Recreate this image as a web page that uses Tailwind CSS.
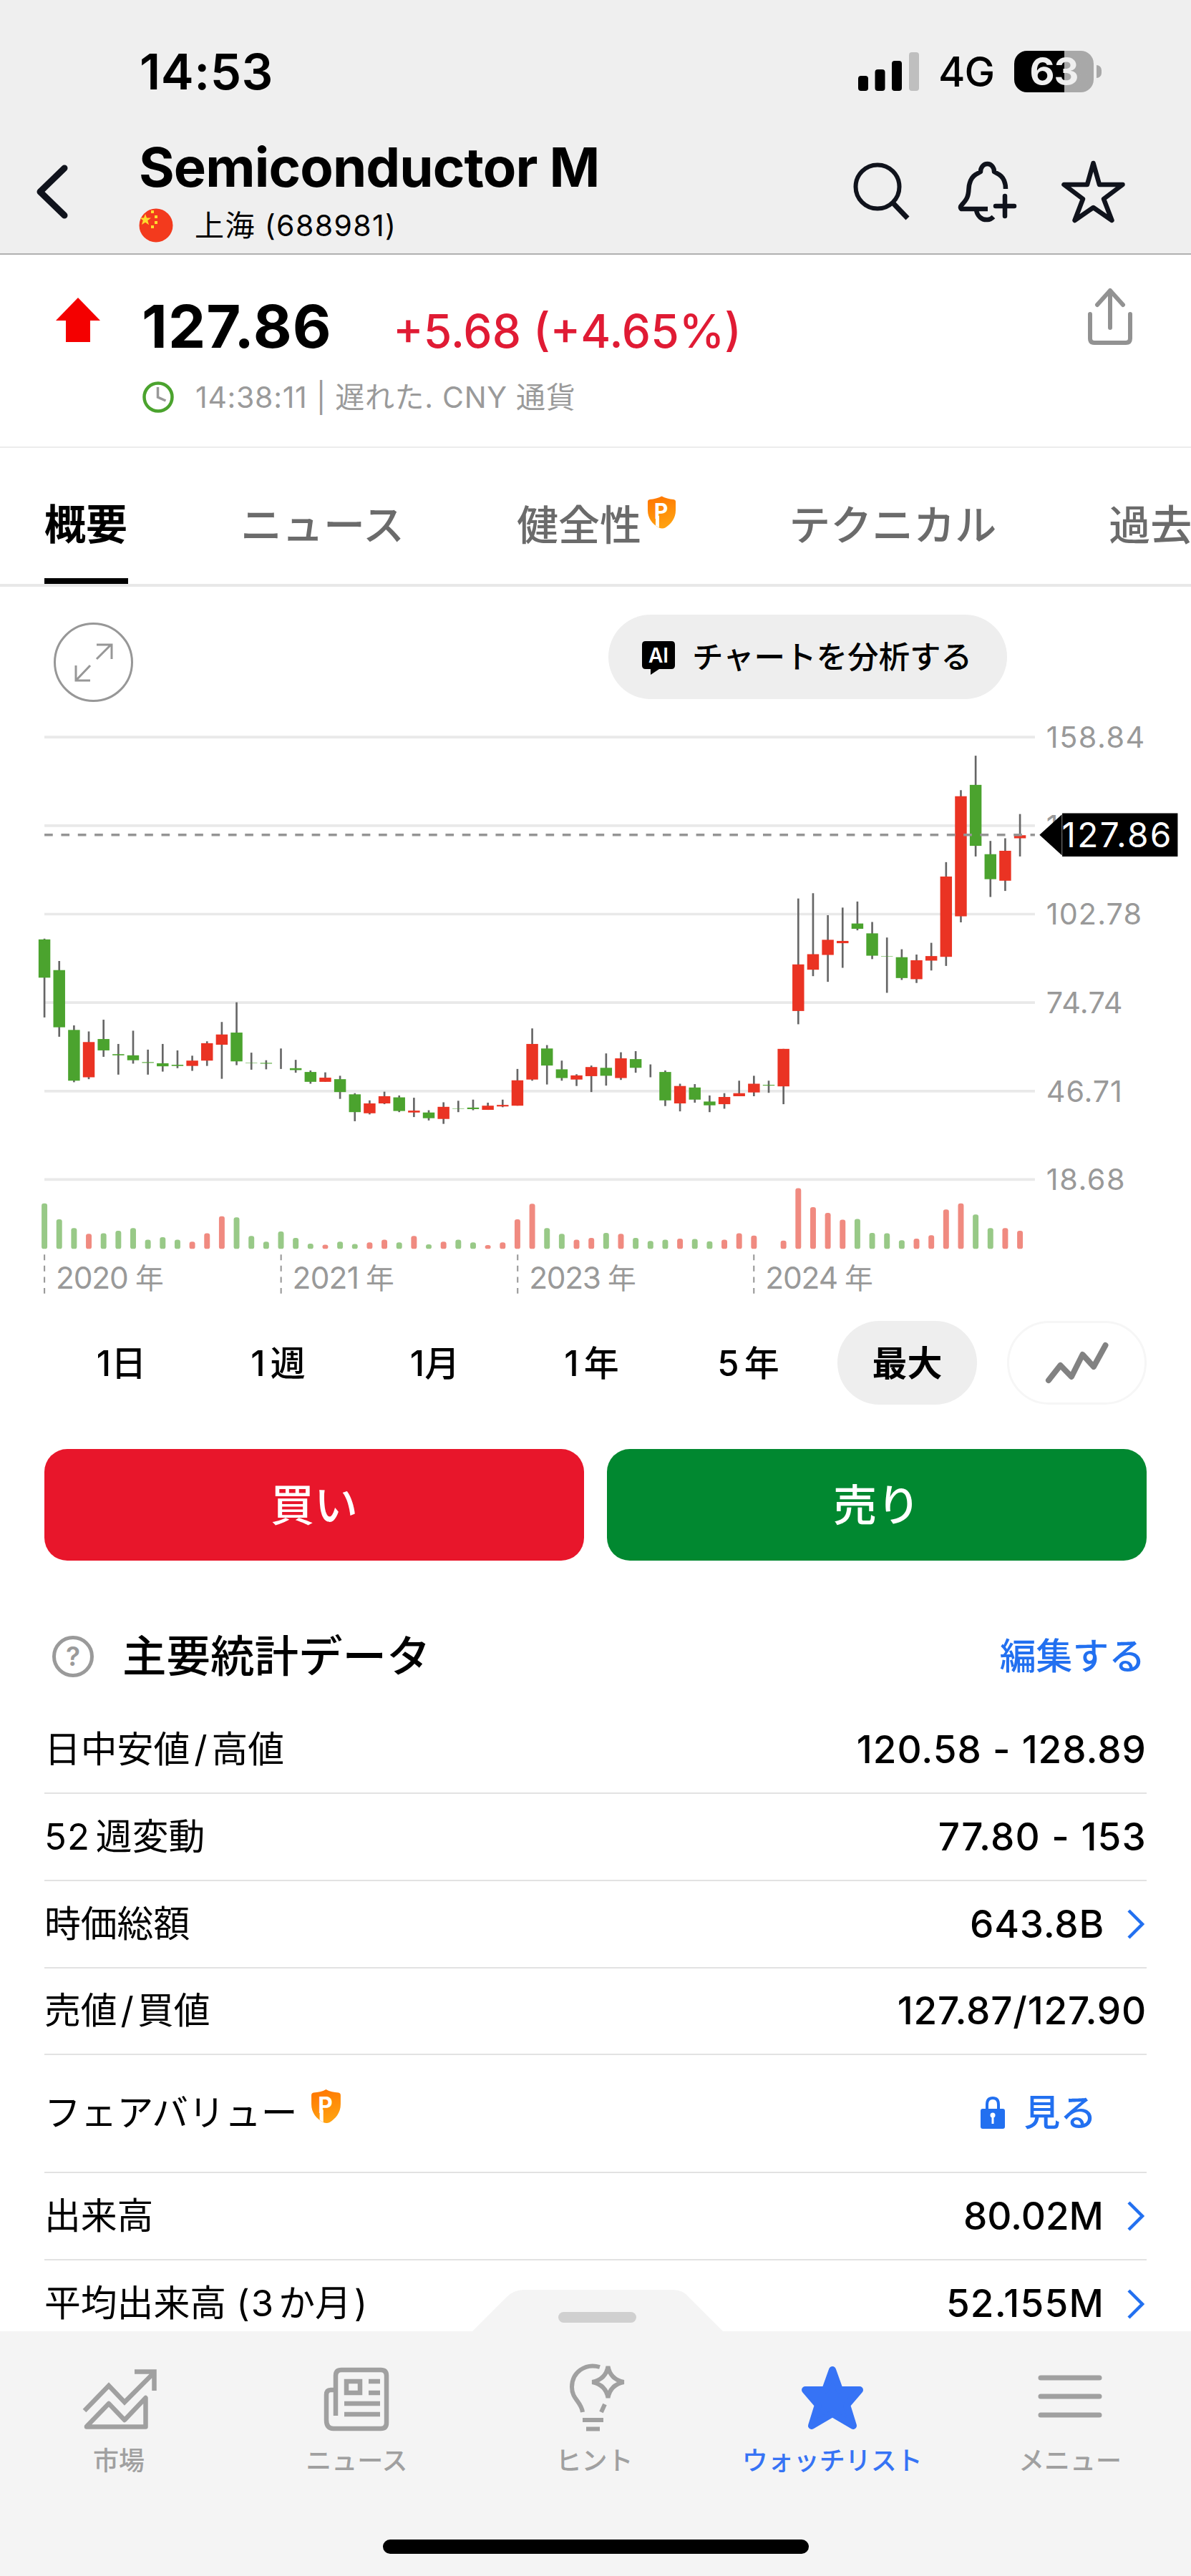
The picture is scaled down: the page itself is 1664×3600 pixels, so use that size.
<!DOCTYPE html>
<html lang="ja">
<head>
  <meta charset="UTF-8" />
  <meta name="viewport" content="width=device-width, initial-scale=1.0"/>
  <title>Semiconductor M - 上海 (688981)</title>
  <script src="https://cdn.jsdelivr.net/npm/@tailwindcss/browser@4"></script>
</head>
<body class="bg-white text-black font-['Inter','Noto_Sans_CJK_JP',sans-serif] leading-none">
  <div class="relative w-[1664px] h-[3600px] overflow-hidden flex flex-col">

    <!-- Header -->
    <header class="h-[356px] shrink-0 bg-[#efefef] border-b-2 border-[#b0b0b0]">
      <div class="h-[200px] pl-[195px] pr-[125px] flex items-center justify-between">
        <span class="text-[69px] font-semibold tracking-[0.500px]">14:53</span>
        <div class="flex items-center">
          <svg class="w-[86px] h-[54px]" viewBox="0 0 86 54">
            <rect x="0" y="33" width="14" height="21" rx="4"/>
            <rect x="23.500" y="24" width="14" height="30" rx="4"/>
            <rect x="47" y="12" width="14" height="42" rx="4"/>
            <rect x="71" y="0" width="14" height="54" rx="4" fill="#bfbfbf"/>
          </svg>
          <span class="ml-[26px] text-[57px] font-medium tracking-[-1px]">4G</span>
          <div class="ml-[28px] w-[111px] h-[58px] rounded-[18px] bg-linear-to-r from-black from-63% to-[#a8a8a8] to-63% flex items-center justify-center">
            <span class="text-[54px] font-bold text-[#efefef] tracking-[-1px]">63</span>
          </div>
          <div class="ml-[4px] w-[7px] h-[18px] rounded-r-full bg-[#a8a8a8]"></div>
        </div>
      </div>
      <div class="h-[154px] flex">
        <svg class="mt-[26px] ml-[46px] w-[54px] h-[84px] shrink-0" viewBox="0 0 54 84" fill="none" stroke="#10131c" stroke-width="9" stroke-linecap="round" stroke-linejoin="round">
          <path d="M44 9 10 42l34 33"/>
        </svg>
        <div class="-mt-[5px] ml-[94px] w-[800px]">
          <div class="text-[76px] font-bold tracking-[-0.900px] whitespace-nowrap">Semiconductor M</div>
          <div class="mt-[20px] flex items-center">
            <svg class="w-[48px] h-[48px]" viewBox="0 0 48 48">
              <circle cx="24" cy="24" r="23.500" fill="#f33a1d"/>
              <path d="m9 8 2 5.500h6l-4.700 3.700 1.800 6L9 19.700 4 23l1.800-6L1.500 13.500H7Z" fill="#fddb2e"/>
              <path d="M17 3h4v4h-4zM22 10h4v4h-4zM22 18h4v4h-4zM17 24h4v4h-4z" fill="#fddb2e"/>
            </svg>
            <span class="ml-[30px] text-[41px] tracking-[1.400px]">上海 (688981)</span>
          </div>
        </div>
        <svg class="mt-[24px] ml-[192px] w-[88px] h-[88px]" viewBox="0 0 88 88" fill="none" stroke="#10131c" stroke-width="6">
          <ellipse cx="40" cy="37" rx="30.500" ry="30.500"/>
          <path d="M61 59l21 22" stroke-width="7"/>
        </svg>
        <svg class="mt-[22px] ml-[60px] w-[92px] h-[92px]" viewBox="0 0 92 92" fill="none" stroke="#10131c" stroke-width="6.500" stroke-linejoin="round">
          <path d="M71 42c0-9-3-16-9-20l-7-4c0-6-4-11-9.500-11S36 12 36 18l-7 4c-6 4-9 11-9.500 20-.5 11-3 15-9.500 22-4 4-1 6 0 6h36"/>
          <path d="M30 71c1 9 8 15 16 14 4 0 6-2 8-4"/>
          <path d="M70 52v28M57 66h26" stroke-linecap="round"/>
        </svg>
        <svg class="mt-[20px] ml-[54px] w-[95px] h-[95px]" viewBox="0 0 95 95" fill="none" stroke="#10131c" stroke-width="6.500" stroke-linejoin="round">
          <path d="M47.500 8 56 38h32.500L62 58l11.500 30-26-18-26 18L33 58 6.500 38H39Z"/>
        </svg>
      </div>
    </header>

    <!-- Price -->
    <section class="h-[270px] shrink-0 border-b-2 border-[#ececec] flex">
      <svg class="mt-[60px] ml-[78px] w-[62px] h-[62px] shrink-0" viewBox="0 0 62 62" fill="#f40000">
        <path d="M31 0 62 32H48v30H14V32H0Z"/>
      </svg>
      <div class="ml-[58px] w-[1200px]">
        <div class="mt-[59px] flex items-baseline">
          <span class="w-[351px] text-[83px] font-bold tracking-[1.100px]">127.86</span>
          <span class="text-[64px] font-medium text-[#e01b34]">+5.68 (+4.65%)</span>
        </div>
        <div class="mt-[34px] flex items-center text-[#9a9a9a]">
          <svg class="w-[46px] h-[46px]" viewBox="0 0 46 46" fill="none" stroke-width="4.500">
            <circle cx="23" cy="23" r="19.500" stroke="#4ba32e"/>
            <path d="M22.500 9v14l11 5" stroke="#999" stroke-width="3.500"/>
          </svg>
          <span class="ml-[29px] text-[41px] tracking-[0.700px] whitespace-nowrap">14:38:11 | 遅れた. CNY 通貨</span>
        </div>
      </div>
      <svg class="mt-[42px] ml-[116px] w-[74px] h-[90px] shrink-0" viewBox="0 0 74 90" fill="none" stroke="#929292" stroke-width="6" stroke-linecap="round" stroke-linejoin="round">
        <path d="M37 60V8M19 28 37 8l18 20M9 41v34q0 6 6 6h44q6 0 6-6V41"/>
      </svg>
    </section>

    <!-- Tabs -->
    <nav class="h-[194px] shrink-0 border-b-4 border-[#e8e8e8] pl-[62px] flex gap-[157px] text-[58px] font-medium text-[#6b6b6b] whitespace-nowrap">
      <div class="h-[190px] w-[117px] shrink-0 pt-[78px] border-b-8 border-black text-black font-bold">概要</div>
      <div class="pt-[79px]">ニュース</div>
      <div class="pt-[79px] flex">健全性
        <svg class="-mt-[12px] ml-[8px] w-[41px] h-[46px] overflow-visible" viewBox="0 0 42 46">
          <linearGradient id="pro" x1="0" y1="0" x2="0.300" y2="1">
            <stop stop-color="#ff7300"/><stop offset="1" stop-color="#ffa010"/>
          </linearGradient>
          <path d="M21 0c5 3 11 4 17 4.500q3 .5 3 3.500v12c0 12-7 20-15 25q-4 2-9 0C8 40 1 32 1 20V8q0-3 3-3.500C10 4 16 3 21 0Z" fill="url(#pro)"/>
          <text x="10" y="32" class="text-[31px] font-bold" fill="#fff">P</text>
          <path d="M12.300 28h5v17l-5-3Z" fill="#fff"/>
        </svg>
      </div>
      <div class="pt-[79px]">テクニカル</div>
      <div class="pt-[79px]">過去</div>
    </nav>

    <!-- Chart toolbar -->
    <div class="h-[180px] shrink-0 flex">
      <svg class="mt-[48px] ml-[73px] w-[115px] h-[115px]" viewBox="0 0 115 115" fill="none" stroke="#979797" stroke-width="3">
        <circle cx="57.500" cy="57.500" r="54"/>
        <path d="m62 53 20-20M62 33h21v20M53 62 33 83M33 62v21h20"/>
      </svg>
      <button class="mt-[39px] ml-[662px] w-[557px] h-[118px] rounded-full bg-[#eee] pl-[46px] flex items-center text-[43.500px] font-medium whitespace-nowrap">
        <svg class="mt-[3px] w-[48px] h-[48px]" viewBox="0 0 48 48">
          <path d="M6 0h36q5 0 5 5v29q0 5-5 5H25l-12 8v-8H6q-5 0-5-5V5q0-5 5-5Z"/>
          <text x="24" y="30" text-anchor="middle" class="text-[28px] font-semibold" fill="#fff">AI</text>
        </svg>
        <span class="ml-[23px] pt-[2px]">チャートを分析する</span>
      </button>
    </div>

    <!-- Price chart -->
    <svg id="chart" class="w-[1664px] h-[830px] shrink-0" viewBox="0 0 3136 1568" preserveAspectRatio="none"></svg>

    <!-- Range selector -->
    <div class="mt-[16px] h-[117px] shrink-0 pl-[72px] flex gap-[24px] text-[49px] font-medium">
      <button class="pt-[2px] w-[195px]">1日</button>
      <button class="pt-[2px] w-[195px]"><span class="mr-[7px]">1</span>週</button>
      <button class="pt-[2px] w-[195px]">1月</button>
      <button class="pt-[2px] w-[195px]"><span class="mr-[7px]">1</span>年</button>
      <button class="pt-[2px] w-[195px]"><span class="mr-[7px]">5</span>年</button>
      <button class="pt-[2px] ml-[3px] w-[195px] rounded-full bg-[#eee] font-bold">最大</button>
      <button class="ml-[18px] w-[195px] rounded-full border-[3px] border-[#f6f6f6] flex items-center justify-center">
        <svg class="w-[90px] h-[60px]" viewBox="0 0 90 60" fill="none" stroke="#828282" stroke-width="8" stroke-linecap="round" stroke-linejoin="round">
          <path d="m5 54 16.500-21L37 49l15.500-31L68 35 84.500 5"/>
        </svg>
      </button>
    </div>

    <!-- Buy / Sell -->
    <div class="mt-[62px] h-[156px] shrink-0 px-[62px] flex gap-[32px] text-[61px] font-medium text-white">
      <button class="pt-[3px] flex-1 rounded-[32px] bg-[#e8162b]">買い</button>
      <button class="pt-[3px] flex-1 rounded-[32px] bg-[#018830]">売り</button>
    </div>

    <!-- Key statistics -->
    <section class="pl-[62px] pr-[62px] text-[50.800px]">
      <div class="mt-[84px] h-[100px] flex items-center">
        <svg class="ml-[10px] w-[60px] h-[60px]" viewBox="0 0 60 60">
          <circle cx="30" cy="30" r="26.500" fill="none" stroke="#9a9a9a" stroke-width="5"/>
          <text x="30" y="43" text-anchor="middle" class="text-[37px] font-semibold" fill="#9a9a9a">?</text>
        </svg>
        <h2 class="ml-[39px] text-[61.500px] font-medium">主要統計データ</h2>
        <a class="ml-auto mr-[2px] font-medium text-[#2270f0]">編集する</a>
      </div>
      <div class="mt-[20px] h-[122px] border-b-2 border-[#e2e2e2] flex items-center justify-between">
        <span>日中安値<span class="mx-[6px]">/</span>高値</span><span class="text-[53px] font-medium tracking-[1px]">120.58 - 128.89</span>
      </div>
      <div class="h-[122px] border-b-2 border-[#e2e2e2] flex items-center justify-between">
        <span><span class="mr-[8px] tracking-[1px]">52</span>週変動</span><span class="text-[53px] font-medium tracking-[1.200px]">77.80 - 153</span>
      </div>
      <div class="h-[122px] border-b-2 border-[#e2e2e2] flex items-center justify-between">
        <span>時価総額</span>
        <span class="flex items-center text-[53px] font-medium tracking-[0.800px]">643.8B
          <svg class="ml-[31px] w-[28px] h-[46px]" viewBox="0 0 28 46" fill="none" stroke="#2270f0" stroke-width="4.500"><path d="m3 4 19 19L3 42"/></svg>
        </span>
      </div>
      <div class="h-[121px] border-b-2 border-[#e2e2e2] flex items-center justify-between">
        <span>売値<span class="mx-[5px]">/</span>買値</span><span class="text-[53px] font-medium tracking-[0.800px]">127.87/127.90</span>
      </div>
      <div class="h-[165px] border-b-2 border-[#e2e2e2] flex items-center justify-between">
        <span class="flex">フェアバリュー
          <svg class="-mt-[8px] ml-[18px] w-[43px] h-[47px] overflow-visible" viewBox="0 0 42 46">
            <path d="M21 0c5 3 11 4 17 4.500q3 .5 3 3.500v12c0 12-7 20-15 25q-4 2-9 0C8 40 1 32 1 20V8q0-3 3-3.500C10 4 16 3 21 0Z" fill="url(#pro)"/>
            <text x="10" y="32" class="text-[31px] font-bold" fill="#fff">P</text>
            <path d="M12.300 28h5v17l-5-3Z" fill="#fff"/>
          </svg>
        </span>
        <a class="mr-[70px] flex items-center font-medium text-[#2270f0]">
          <svg class="w-[34px] h-[46px]" viewBox="0 0 34 46">
            <path d="M9 20V11q0-9 8-9t8 9v9" fill="none" stroke="#2270f0" stroke-width="4"/>
            <rect y="17" width="34" height="28" rx="3" fill="#2270f0"/>
            <circle cx="17" cy="26" r="3.500" fill="#fff"/>
            <path d="M17 26v12" stroke="#fff" stroke-width="3"/>
          </svg>
          <span class="ml-[26px]">見る</span>
        </a>
      </div>
      <div class="h-[122px] border-b-2 border-[#e2e2e2] flex items-center justify-between">
        <span>出来高</span>
        <span class="flex items-center text-[53px] font-medium">80.02M
          <svg class="ml-[32px] w-[28px] h-[46px]" viewBox="0 0 28 46" fill="none" stroke="#2270f0" stroke-width="4.500"><path d="m3 4 19 19L3 42"/></svg>
        </span>
      </div>
      <div class="h-[121px] flex items-center justify-between">
        <span>平均出来高 <span class="mr-[2px]">(</span><span class="mr-[7px]">3</span>か月<span class="ml-[4px]">)</span></span>
        <span class="flex items-center text-[53px] font-medium tracking-[1.200px]">52.155M
          <svg class="ml-[31px] w-[28px] h-[46px]" viewBox="0 0 28 46" fill="none" stroke="#2270f0" stroke-width="4.500"><path d="m3 4 19 19L3 42"/></svg>
        </span>
      </div>
    </section>

    <!-- Bottom tab bar, lies over the scrolled list -->
    <footer class="absolute left-0 bottom-0 w-full">
      <svg class="block ml-[660px] w-[350px] h-[59px]" viewBox="0 0 350 59">
        <path d="M0 59 48 11Q58 1 72 1h208q14 0 22 10l48 48Z" fill="#f4f4f4"/>
        <rect x="120" y="32" width="109" height="15" rx="7.500" fill="#d0d0d0"/>
      </svg>
      <div class="h-[342px] bg-[#f4f4f4]">
        <div class="pt-[38px] mr-[3px] h-[291px] grid grid-cols-5 text-[36px] font-medium text-[#a0a0a0]">
          <div class="flex flex-col items-center">
            <svg class="mt-[7px] w-[112px] h-[98px]" viewBox="0 0 112 98" fill="none" stroke="#a0a0a0" stroke-width="6.500">
              <path d="m8 66 34-35 22 23 41-41M78 11.500h27.500V38" stroke-linejoin="miter"/>
              <path d="m11 88 31-32 22 23 29.500-31v40.500H11Z" stroke-linejoin="round"/>
            </svg>
            <span class="mt-[20px]">市場</span>
          </div>
          <div class="flex flex-col items-center">
            <svg class="mt-[7px] w-[106px] h-[98px]" viewBox="0 0 106 98" fill="none" stroke="#a0a0a0" stroke-width="6.500">
              <path d="M24 73V17q0-8 8-8h55q8 0 8 8v66q0 8-8 8H21q-10 0-10-12V44q0-7 6-7h7"/>
              <path d="M39 25h19v16H39zM70 25h16M70 41h16M36 56h50M36 71h50"/>
            </svg>
            <span class="mt-[20px]">ニュース</span>
          </div>
          <div class="flex flex-col items-center">
            <svg class="ml-[4px] w-[94px] h-[105px]" viewBox="-3 0 94 105" fill="none" stroke="#a0a0a0" stroke-width="6">
              <path d="M50 12C30 6 11 19 11 40c0 17 13 20 15 35M52 75l5-11M26 86h29M31 98.500h19"/>
              <path d="M61.500 11q3 18 22 22-19 4-22 22-3-18-22-22 19-4 22-22Z"/>
            </svg>
            <span class="mt-[20px]">ヒント</span>
          </div>
          <div class="flex flex-col items-center text-[#3673f5]">
            <svg class="mt-[7px] w-[100px] h-[98px]" viewBox="0 0 100 98">
              <path d="m50 9 10 28h28L70 58l9 29-29-17-29 17 9-29L12 37h28Z" fill="#3673f5" stroke="#3673f5" stroke-width="10" stroke-linejoin="round"/>
            </svg>
            <span class="mt-[20px]">ウォッチリスト</span>
          </div>
          <div class="flex flex-col items-center">
            <svg class="mt-[7px] w-[100px] h-[98px]" viewBox="0 0 100 98" fill="none" stroke="#a0a0a0" stroke-width="7" stroke-linecap="round">
              <path d="M9 20h82M9 46h82M9 72h82"/>
            </svg>
            <span class="mt-[20px]">メニュー</span>
          </div>
        </div>
        <div class="mx-auto w-[595px] h-[20px] rounded-full bg-black"></div>
      </div>
    </footer>
  </div>

  <script>
    // high, body top, body bottom, low, direction, top of volume bar (0 = no bar)
    const candles = [
      [589,591,692,797,"g",1288],[648,672,823,848,"g",1330],[818,830,964,968,"g",1353],[834,862,955,960,"r",1368],
      [803,854,884,901,"g",1367],[867,894,897,948,"g",1360],[832,897,910,919,"g",1353],[882,915,917,948,"g",1384],
      [867,918,926,940,"g",1377],[884,922,925,931,"g",1384],[898,911,925,938,"r",1389],[860,865,911,925,"r",1367],
      [809,842,869,959,"r",1322],[757,837,913,923,"g",1325],[890,917,918,935,"g",1374],[910,917,919,934,"g",1389],
      [879,933,933,933,"g",1362],[909,931,936,943,"g",1379],[937,941,967,972,"g",1394],[942,956,967,967,"r",1397],
      [951,960,994,1012,"g",1389],[997,1000,1047,1071,"g",1395],[1016,1024,1050,1053,"r",1391],[993,1005,1024,1026,"r",1384],
      [1003,1008,1044,1047,"g",1391],[1009,1043,1048,1060,"r",1374],[1042,1048,1063,1069,"g",1396],[1021,1033,1065,1078,"r",1389],
      [1017,1037,1038,1047,"g",1384],[1014,1035,1039,1042,"g",1391],[1022,1030,1041,1041,"r",1398],[1014,1028,1032,1034,"r",1391],
      [933,963,1030,1030,"r",1330],[826,867,961,964,"r",1289],[870,879,924,974,"g",1353],[911,934,957,964,"g",1368],
      [947,950,961,978,"r",1384],[924,928,952,994,"r",1379],[892,930,951,977,"g",1366],[889,905,957,962,"r",1368],
      [886,907,930,943,"g",1379],[921,955,955,955,"g",1387],[937,941,1016,1031,"g",1384],[972,978,1024,1045,"r",1381],
      [973,982,1014,1022,"g",1382],[1003,1019,1029,1047,"g",1388],[997,1007,1026,1038,"r",1384],[964,997,1005,1005,"r",1367],
      [951,972,995,1005,"r",1373],[964,975,977,996,"g",0],[880,880,979,1026,"r",1386],[483,657,780,815,"r",1248],
      [469,630,671,688,"r",1298],[527,592,632,703,"r",1313],[507,595,601,666,"r",1331],[491,549,563,567,"g",1329],
      [545,575,634,643,"g",1366],[586,635,636,732,"g",1367],[617,638,693,698,"g",1385],[631,646,696,706,"r",1381],
      [600,635,647,673,"r",1372],[387,425,637,661,"r",1304],[197,213,530,546,"r",1288],[106,183,344,372,"g",1317],
      [331,366,432,479,"g",1353],[324,357,436,463,"r",1353],[260,316,324,372,"r",1360]
    ];
    const body = { g: "#4ba32e", r: "#ea3323" };
    const volume = { g: "#98c987", r: "#f08a80" };
    const prices = [["158.84", 259], ["130.81", 255], ["102.78", 251], ["74.74", 201], ["46.71", 200], ["18.68", 207]];
    const years = [["2020", 117, 192], ["2021", 740, 176], ["2023", 1363, 190], ["2024", 1985, 192]];

    let svg = "";
    prices.forEach(([label, width], i) => {
      const y = 57 + i * 233.6;
      svg += `<path d="M117 ${y}H2725" stroke="#e9e9e9" stroke-width="7"/>`;
      svg += `<text x="2755" y="${y + 28}" textLength="${width}" font-size="78" fill="#999">${label}</text>`;
    });

    candles.forEach(([high, top, bottom, low, dir, vol], i) => {
      const x = 117 + i * 38.92;
      svg += `<path d="M${x} ${high}V${low}" stroke="#666" stroke-width="5"/>`;
      if (bottom > top) svg += `<rect x="${x - 15.5}" y="${top}" width="31" height="${bottom - top}" fill="${body[dir]}"/>`;
      if (vol) svg += `<rect x="${x - 7.5}" y="${vol}" width="15" height="${1408 - vol}" rx="6" fill="${volume[dir]}"/>`;
    });

    years.forEach(([year, x, width]) => {
      svg += `<path d="M${x} 1423V1526" stroke="#999" stroke-width="4" stroke-dasharray="15 14.500"/>`;
      svg += `<text x="${x + 30}" y="1513" textLength="${width}" font-size="80" fill="#999">${year}</text>`;
      svg += `<text x="${x + 30 + width + 17}" y="1513" font-size="75" fill="#999">年</text>`;
    });

    // last price marker
    svg += `<path d="M117 315H2725" stroke="#959595" stroke-width="7" stroke-dasharray="22 22"/>`;
    svg += `<path d="M2737 315l59-54v108ZM2797 258h304v114h-304Z"/>`;
    svg += `<text x="2796" y="348" textLength="288" font-size="90" fill="#fff">127.86</text>`;
    document.getElementById("chart").innerHTML = svg;
  </script>
</body>
</html>
